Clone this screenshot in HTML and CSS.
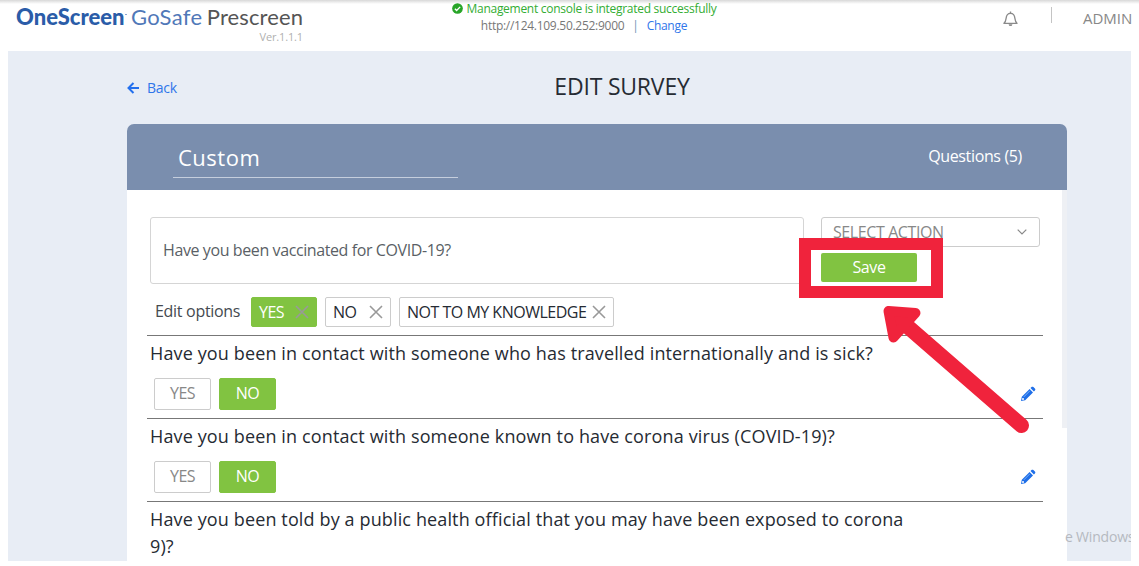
FILE: index.html
```html
<!DOCTYPE html>
<html lang="en">
<head>
  <meta charset="UTF-8" />
  <meta name="viewport" content="width=device-width, initial-scale=1.0" />
  <title>Edit Survey</title>
  <link rel="stylesheet" href="styles.css">
</head>
<body>
  <header class="topbar">
    <div class="brand">
      <div class="logo"><span class="logo-one">OneScreen</span><span class="logo-dot"></span><span class="logo-safe">GoSafe</span><span class="logo-pre">Prescreen</span></div>
      <div class="version">Ver.1.1.1</div>
    </div>
    <div class="console">
      <div class="console-ok">
        <svg class="check" viewBox="0 0 512 512"><circle cx="256" cy="256" r="248" fill="#28a528"/><path d="M135 265l80 80 165-165" fill="none" stroke="#fff" stroke-width="64"/></svg>
        <span>Management console is integrated successfully</span>
      </div>
      <div class="console-url"><span>http://124.109.50.252:9000</span><span class="bar">|</span><a href="#">Change</a></div>
    </div>
    <div class="user">
      <svg class="bell" viewBox="0 0 16 18"><path d="M1 13.6h14c-1.6-1.3-2-2.7-2.300-5.300C12.400 5 11 3 8 3S3.600 5 3.300 8.300C3 10.900 2.600 12.300 1 13.600z" fill="none" stroke="#8a8a8a" stroke-width="1.400" stroke-linejoin="round"/><path d="M8 1v2" stroke="#8a8a8a" stroke-width="1.500"/><path d="M6 14.500a2 2 0 0 0 4 0z" fill="#8a8a8a"/></svg>
      <span class="divider"></span>
      <span class="admin">ADMIN</span>
    </div>
  </header>

  <main class="page">
    <div class="title-row">
      <a class="back" href="#">
        <svg viewBox="0 0 12 12"><path d="M6.500 1L1.500 6l5 5M1.500 6H12" fill="none" stroke="#2370ee" stroke-width="2"/></svg>
        <span>Back</span>
      </a>
      <h1>EDIT SURVEY</h1>
    </div>

    <section class="card">
      <div class="card-head">
        <div class="survey-name">Custom</div>
        <div class="count">Questions (5)</div>
      </div>

      <div class="card-body">
        <div class="editor">
          <div class="question-box">Have you been vaccinated for COVID-19?</div>
          <div class="actions">
            <div class="select">
              <span>SELECT ACTION</span>
              <svg viewBox="0 0 10 6"><path d="M.7.7L5 5 9.300.7" fill="none" stroke="#888" stroke-width="1.200"/></svg>
            </div>
            <div class="save-wrap">
              <button class="save">Save</button>
              <div class="highlight"></div>
            </div>
          </div>
        </div>
        <div class="options">
          <span class="options-label">Edit options</span>
          <span class="tag tag-yes on">YES<svg viewBox="0 0 14 14"><path d="M1 1l12 12M13 1L1 13"/></svg></span>
          <span class="tag tag-no">NO<svg viewBox="0 0 14 14"><path d="M1 1l12 12M13 1L1 13"/></svg></span>
          <span class="tag tag-unknown">NOT TO MY KNOWLEDGE<svg viewBox="0 0 14 14"><path d="M1 1l12 12M13 1L1 13"/></svg></span>
        </div>

        <div class="item">
          <p>Have you been in contact with someone who has travelled internationally and is sick?</p>
          <div class="answers">
            <span class="answer">YES</span><span class="answer on">NO</span>
            <svg class="pencil" viewBox="0 0 16 16"><path d="M1 15l.8-4.300L9.600 3l3.400 3.400-7.800 7.800zM10.500 2.100l1-1c.6-.6 1.300-.6 1.900 0l1.500 1.500c.6.6.6 1.300 0 1.900l-1 1z" fill="#1f6fe8"/><path d="M3.800 10.900L9.900 4.800" stroke="#8fbcfa" stroke-width=".8"/><circle cx="3" cy="13" r="1" fill="#fff"/></svg>
          </div>
        </div>
        <div class="item">
          <p>Have you been in contact with someone known to have corona virus (COVID-19)?</p>
          <div class="answers">
            <span class="answer">YES</span><span class="answer on">NO</span>
            <svg class="pencil" viewBox="0 0 16 16"><path d="M1 15l.8-4.300L9.600 3l3.400 3.400-7.800 7.800zM10.500 2.100l1-1c.6-.6 1.300-.6 1.900 0l1.500 1.500c.6.6.6 1.300 0 1.900l-1 1z" fill="#1f6fe8"/><path d="M3.800 10.900L9.900 4.800" stroke="#8fbcfa" stroke-width=".8"/><circle cx="3" cy="13" r="1" fill="#fff"/></svg>
          </div>
        </div>
        <div class="item">
          <p>Have you been told by a public health official that you may have been exposed to corona<br>9)?</p>
        </div>
      </div>
    </section>

    <div class="watermark">e Windows</div>
  </main>

  <!-- arrow pointing at the save button -->
  <svg class="arrow" viewBox="0 0 150 132">
    <path d="M27 22L141.500 121.500" stroke="#f0233c" stroke-width="15" stroke-linecap="round"/>
    <path d="M8.500 7l27 2L13.500 33.500z" fill="#f0233c" stroke="#f0233c" stroke-width="10" stroke-linejoin="round"/>
  </svg>
</body>
</html>
```
FILE: styles.css
```css
* {
  box-sizing: border-box;
}
body {
  margin: 0;
  height: 566px;
  overflow: hidden;
  background: #fff;
  color: #262b33;
  font-family: "Open Sans", "Noto Sans", sans-serif;
  position: relative;
}
a {
  color: #2f76ea;
  text-decoration: none;
}
.topbar {
  height: 51px;
  display: grid;
  grid-template-columns: 303px 562px 1fr;
  background: linear-gradient(#d8d8d8, #fff 4px);
}
.brand {
  padding: 4px 0 0 16px;
}
.logo {
  display: flex;
  font-family: Lato, sans-serif;
  font-size: 22px;
  line-height: 25px;
  white-space: nowrap;
}
.logo-one {
  width: 109px;
  color: #2a5ca8;
  font-weight: 900;
}
.logo-dot {
  width: 2px;
  height: 1px;
  margin: 10px 4px 0 0;
  background: #8aa5d0;
}
.logo-safe {
  width: 76px;
  color: #5078b8;
  letter-spacing: 0.3px;
}
.logo-pre {
  color: #555;
  letter-spacing: 0.1px;
}
.version {
  font-size: 11px;
  line-height: 15px;
  letter-spacing: -0.15px;
  text-align: right;
  color: #b0b0b0;
}
.console {
  text-align: center;
  font-size: 12px;
  letter-spacing: -0.28px;
  color: #777;
}
.console-ok {
  display: flex;
  justify-content: center;
  align-items: center;
  gap: 4px;
  color: #33ad33;
  line-height: 17px;
}
.check {
  width: 11px;
  height: 11px;
}
.console-url {
  line-height: 18px;
}
.bar {
  margin: 0 8px;
  color: #6f93b5;
}
.user {
  display: flex;
  align-items: flex-start;
  padding-left: 138px;
  color: #888;
}
.bell {
  width: 15px;
  height: 18px;
  margin-top: 10px;
}
.divider {
  width: 1px;
  height: 16px;
  margin: 7px 31px 0 33px;
  background: #c4c4c4;
}
.admin {
  font-size: 15px;
  line-height: 20px;
  margin-top: 8px;
}
.page {
  position: relative;
  height: 510px;
  margin: 0 8px;
  padding: 0 64px 0 119px;
  background: #e8edf5;
  overflow: hidden;
}
.title-row {
  display: grid;
  grid-template-columns: 1fr auto 1fr;
  align-items: center;
  height: 73px;
  width: 990px;
}
.back {
  display: flex;
  align-items: center;
  gap: 8px;
  font-size: 14px;
  letter-spacing: -0.3px;
}
.back svg {
  width: 12px;
  height: 12px;
}
h1 {
  margin: -3px 0 0;
  font-size: 23px;
  font-weight: 400;
  letter-spacing: -0.2px;
}
.card {
  width: 940px;
}
.card-head {
  height: 66px;
  display: flex;
  justify-content: space-between;
  padding: 0 45px 0 46px;
  border-radius: 7px 7px 0 0;
  background: #7a8eae;
  color: #fff;
}
.survey-name {
  width: 285px;
  height: 54px;
  padding: 17px 0 0 5px;
  border-bottom: 1px solid #c5cedd;
  font-size: 22px;
  line-height: 32px;
  letter-spacing: 0.5px;
}
.count {
  font-size: 16px;
  line-height: 65px;
  letter-spacing: -0.35px;
}
.card-body {
  height: 371px;
  padding: 27px 24px 0 20px;
  /* the panel is slightly narrower than its header until the second question */
  background: linear-gradient(#eef0f4, #eef0f4) right top / 5px 238px no-repeat #fff;
}
.editor {
  display: flex;
  gap: 17px;
  padding: 0 3px;
}
.question-box {
  width: 654px;
  height: 67px;
  padding-left: 12px;
  border: 1px solid #d5d5d5;
  border-radius: 3px;
  font-size: 16px;
  line-height: 64px;
  letter-spacing: -0.4px;
  color: #5a5f66;
}
.actions {
  width: 219px;
}
.select {
  height: 30px;
  display: flex;
  justify-content: space-between;
  align-items: center;
  padding: 0 12px 0 11px;
  border: 1px solid #ccc;
  border-radius: 3px;
  font-size: 16px;
  line-height: 28px;
  letter-spacing: -0.4px;
  color: #888;
}
.select svg {
  width: 10px;
  height: 6px;
}
.save-wrap {
  position: relative;
  width: 96px;
  margin-top: 6px;
}
.save {
  display: block;
  width: 96px;
  height: 29px;
  padding: 0 0 2px;
  border: none;
  border-radius: 2px;
  background: #81c341;
  color: #fff;
  font: 16px "Open Sans", sans-serif;
  letter-spacing: -0.4px;
}
.highlight {
  position: absolute;
  left: -22px;
  top: -15px;
  width: 144px;
  height: 60px;
  border: 12px solid #f0233c;
}
.options {
  display: flex;
  align-items: center;
  height: 51px;
  padding: 5px 8px 0;
  font-size: 16px;
  letter-spacing: -0.5px;
}
.options-label {
  width: 96px;
  margin-top: -2px;
  letter-spacing: -0.3px;
  color: #454a50;
}
.tag {
  display: flex;
  align-items: center;
  justify-content: space-between;
  height: 30px;
  margin-right: 8px;
  padding: 0 7px;
  border: 1px solid #ccc;
  border-radius: 2px;
  line-height: 26px;
  white-space: nowrap;
}
.tag svg {
  width: 14px;
  height: 14px;
  stroke: #999;
  stroke-width: 1.6;
}
.tag-yes,
.tag-no {
  width: 66px;
}
.tag-unknown {
  width: 215px;
}
.tag.on,
.answer.on {
  background: #81c341;
  border-color: #81c341;
  color: #fff;
}
.item {
  height: 83px;
  width: 896px;
  border-top: 1px solid #777;
}
.item p {
  margin: 0;
  padding: 4px 3px 0;
  font-size: 18px;
  line-height: 27px;
  letter-spacing: 0.13px;
  white-space: nowrap;
}
.answers {
  display: flex;
  align-items: center;
  gap: 8px;
  padding: 11px 7px 0;
}
.answer {
  width: 57px;
  height: 32px;
  border: 1px solid #ccc;
  border-radius: 2px;
  font-size: 16px;
  line-height: 29px;
  letter-spacing: -0.5px;
  text-align: center;
  color: #888;
}
.pencil {
  width: 16px;
  height: 16px;
  margin-left: auto;
}
.watermark {
  position: absolute;
  left: 1057px;
  top: 476px;
  font-size: 14px;
  line-height: 20px;
  letter-spacing: -0.2px;
  color: #b5b9c0;
  white-space: nowrap;
}
.arrow {
  position: absolute;
  left: 880px;
  top: 304px;
  width: 150px;
  height: 132px;
}
```
